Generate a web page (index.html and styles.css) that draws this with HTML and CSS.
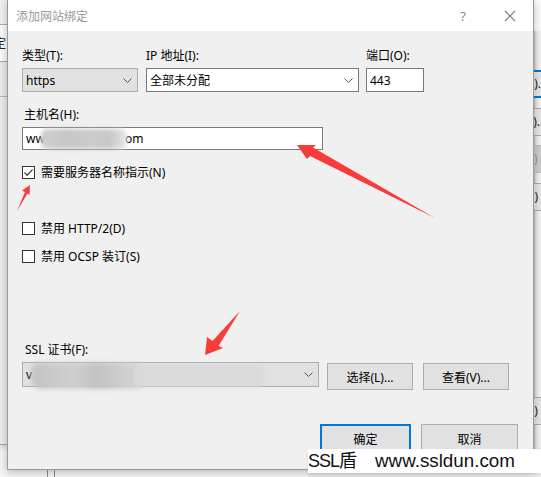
FILE: index.html
```html
<!DOCTYPE html>
<html lang="zh-CN">
<head>
<meta charset="utf-8">
<title>添加网站绑定</title>
<link rel="stylesheet" href="styles.css">
</head>
<body>
<div class="desk">
  <div class="bg-left">
    <div class="l-top"></div>
    <div class="l-row"><span class="frag">定</span></div>
    <div class="l-band"></div>
    <div class="l-rest"></div>
  </div>

  <div class="bg-right">
    <div class="r-top"></div>
    <div class="r-gap g39"></div>
    <div class="r-btn blue"><span class="frag">(A)...</span></div>
    <div class="r-gap g10"></div>
    <div class="r-btn"><span class="frag">(E)...</span></div>
    <div class="r-gap g9"></div>
    <div class="r-btn dis"><span class="frag">(R)</span></div>
    <div class="r-gap g10"></div>
    <div class="r-btn"><span class="frag">(B)</span></div>
    <div class="r-gap g186"></div>
    <div class="r-btn"><span class="frag">(C)</span></div>
  </div>

  <div class="bottom-lines"><span></span><span></span></div>

  <div class="dialog">
    <div class="titlebar">
      <span class="title">添加网站绑定</span>
      <span class="help">?</span>
      <svg class="close" width="12" height="12" viewBox="0 0 12 12"><path d="M1 1L11 11M11 1L1 11" stroke="#7a7a7a" stroke-width="1.1" fill="none"/></svg>
    </div>
    <div class="content">
      <div class="row1">
        <div class="field">
          <span class="lbl">类型(T):</span>
          <div class="select gray w-type"><span class="val">https</span><svg class="chev" width="9" height="5" viewBox="0 0 9 5"><path d="M0.5 0.5L4.5 4.5L8.5 0.5" stroke="#555" fill="none"/></svg></div>
        </div>
        <div class="field">
          <span class="lbl">IP 地址(I):</span>
          <div class="select white w-ip"><span class="val">全部未分配</span><svg class="chev" width="9" height="5" viewBox="0 0 9 5"><path d="M0.5 0.5L4.5 4.5L8.5 0.5" stroke="#555" fill="none"/></svg></div>
        </div>
        <div class="field">
          <span class="lbl">端口(O):</span>
          <div class="input w-port"><span class="val">443</span></div>
        </div>
      </div>

      <span class="lbl host-lbl">主机名(H):</span>
      <div class="input host"><span class="val">ww</span><span class="blur host-blur"></span><span class="val">om</span></div>

      <div class="check c1"><span class="box"><svg width="11" height="11" viewBox="0 0 11 11"><path d="M1.5 5.5L4.2 8.3L9.6 2.4" stroke="#444" stroke-width="1.3" fill="none"/></svg></span><span>需要服务器名称指示(N)</span></div>
      <div class="check c2"><span class="box"></span><span>禁用 HTTP/2(D)</span></div>
      <div class="check c3"><span class="box"></span><span>禁用 OCSP 装订(S)</span></div>

      <span class="lbl ssl-lbl">SSL 证书(F):</span>
      <div class="ssl-row">
        <div class="select gray w-ssl"><span class="val">v</span><span class="blur ssl-blur"></span><span class="blur ssl-blur2"></span><svg class="chev" width="9" height="5" viewBox="0 0 9 5"><path d="M0.5 0.5L4.5 4.5L8.5 0.5" stroke="#555" fill="none"/></svg></div>
        <button class="btn w-86">选择(L)...</button>
        <button class="btn w-86 ml10">查看(V)...</button>
      </div>

      <div class="actions">
        <button class="btn primary">确定</button>
        <button class="btn cancel">取消</button>
      </div>
    </div>
  </div>

  <svg class="arrows" width="541" height="477" viewBox="0 0 541 477">
    <polygon points="297,145 316,145 313,147.5 435,218 310,156 307,159" fill="#f83b3b"/>
    <polygon points="205,355 207,337 212.5,341 240,311 218.5,346 223,348" fill="#f83b3b"/>
    <polygon points="30,185 22,190.5 25,192 17,211 27.5,193.5 29.5,195" fill="#f83b3b"/>
  </svg>

  <div class="watermark"><span class="wm1">SSL盾</span><span class="wm2">www.ssldun.com</span></div>
</div>
</body>
</html>
```

FILE: styles.css
```css
* { box-sizing: border-box; }
html, body { margin: 0; padding: 0; }
body {
  width: 541px;
  height: 477px;
  overflow: hidden;
  background: #f4f4f4;
  font-family: "Noto Sans", "Noto Sans CJK SC", sans-serif;
  font-size: 12px;
  color: #000;
}
.desk { position: relative; width: 541px; height: 477px; overflow: hidden; }

/* background windows */
.bg-left {
  position: absolute; left: 0; top: 0; width: 7px; height: 470px;
  display: flex; flex-direction: column; overflow: hidden;
}
.l-top { height: 25px; background: #f0f0f0; border-bottom: 1px solid #a8a8a8; }
.l-row { height: 37px; background: #fafafa; border-bottom: 1px solid #a8a8a8; line-height: 36px; }
.l-band { height: 35px; background: #e9e9e9; border-bottom: 1px solid #b8b8b8; }
.l-rest { height: 348px; background: #ececec; border-bottom: 1px solid #a0a0a0; box-shadow: 0 3px 4px rgba(0,0,0,0.12); }
.frag { display: inline-block; white-space: nowrap; color: #222; }
.l-row .frag { margin-left: -6px; font-family: "Noto Sans CJK SC", sans-serif; }

.bg-right {
  position: absolute; left: 533px; top: 0; width: 8px; height: 449px;
  display: flex; flex-direction: column; overflow: hidden;
  background: #f0f0f0;
  box-shadow: inset 3px 0 3px -1px rgba(0,0,0,0.25);
}
.r-top { height: 31px; background: #fbfbfb; flex: none; }
.r-gap { flex: none; }
.g39 { height: 39px; }
.g10 { height: 10px; }
.g9 { height: 9px; }
.g186 { height: 186px; }
.r-btn {
  flex: none; height: 28px; background: #e5e5e5;
  border-top: 1px solid #a8a8a8; border-bottom: 1px solid #a8a8a8;
  line-height: 26px; white-space: nowrap;
}
.r-btn .frag { margin-left: -10px; }
.r-btn.blue { border-top: 2px solid #0078d7; border-bottom: 2px solid #0078d7; line-height: 24px; }
.r-btn.dis { background: #cccccc; border-color: #c0c0c0; }
.r-btn.dis .frag { color: #9a9a9a; }

.bottom-lines { position: absolute; left: 47px; top: 469px; height: 8px; display: flex; gap: 6px; }
.bottom-lines span { width: 1px; height: 8px; background: #8a8a8a; }

/* dialog */
.dialog {
  position: absolute; left: 7px; top: 0; width: 527px; height: 470px;
  background: #f0f0f0;
  border: 1px solid #9a9a9a; border-top: none;
  box-shadow: 0 2px 8px rgba(0,0,0,0.25);
  display: flex; flex-direction: column;
}
.titlebar {
  height: 31px; flex: none; background: #fff;
  display: flex; align-items: center;
  padding-left: 8px;
}
.title { color: #9a9a9a; font-family: "Noto Sans CJK SC", sans-serif; font-size: 12px; }
.help { margin-left: auto; color: #8a8a8a; font-size: 13px; margin-right: 38px; }
.close { margin-right: 17px; }

.content {
  padding: 17px 15px 0 14px;
  display: flex; flex-direction: column; align-items: flex-start;
}
.lbl { display: block; line-height: 16px; height: 16px; white-space: nowrap; }
.row1 { display: flex; }
.field { display: flex; flex-direction: column; }
.field + .field { margin-left: 8px; }
.field:last-child { margin-left: 7px; }
.field .lbl { margin-bottom: 4px; }

.select, .input {
  height: 24px; display: flex; align-items: center;
  padding-left: 3px; white-space: nowrap; position: relative;
}
.select.gray { background: #e1e1e1; border: 1px solid #adadad; }
.select.white, .input { background: #fff; border: 1px solid #7a7a7a; }
.chev { margin-left: auto; margin-right: 5px; flex: none; }
.w-type { width: 116px; }
.w-ip { width: 213px; }
.w-port { width: 58px; }

.host-lbl { margin-top: 15px; padding-left: 2px; }
.host { width: 301px; height: 23px; margin-top: 4px; overflow: visible; }
.blur { display: inline-block; filter: blur(2px); }
.host-blur {
  width: 86px; height: 20px; margin: 0 -2px 0 -4px;
  background: linear-gradient(90deg, #d0d0d0 0%, #c6c6c6 30%, #cbcbcb 60%, #c8c8c8 80%, #e6e6e6 100%);
  border-radius: 6px;
}

.check { display: flex; align-items: center; height: 16px; white-space: nowrap; }
.box {
  width: 13px; height: 13px; border: 1px solid #333; background: #fff;
  margin-right: 6px; display: flex; align-items: center; justify-content: center; flex: none;
}
.c1 { margin-top: 14px; }
.c2 { margin-top: 40px; }
.c3 { margin-top: 12px; }

.ssl-lbl { margin-top: 78px; padding-left: 3px; }
.ssl-row { display: flex; align-items: flex-start; margin-top: 4px; }
.w-ssl { width: 297px; height: 25px; overflow: visible; }
.ssl-blur {
  position: absolute; left: 8px; top: 0; width: 110px; height: 26px;
  background: linear-gradient(90deg, #c4c4c4 0%, #cfcfcf 40%, #c2c2c2 60%, #d6d6d6 100%);
  border-radius: 8px 4px 4px 10px;
}
.ssl-blur2 {
  position: absolute; left: 112px; top: 2px; width: 128px; height: 22px;
  background: #dadada;
  border-radius: 6px;
}

.btn {
  font-family: inherit; font-size: 12px; color: #000;
  background: #e1e1e1; border: 1px solid #adadad;
  height: 27px; padding: 0; margin: 0; margin-top: 1px;
}
.w-86 { width: 86px; margin-left: 8px; }
.ml10 { margin-left: 10px; }

.actions { display: flex; align-self: stretch; justify-content: flex-end; margin-top: 33px; }
.primary { width: 91px; height: 30px; border: 2px solid #0078d7; }
.cancel { width: 97px; height: 30px; margin-left: 10px; }

.arrows { position: absolute; left: 0; top: 0; pointer-events: none; }

.watermark {
  position: absolute; left: 308px; top: 449px; width: 233px; height: 24px;
  background: #fff;
  display: flex; align-items: center;
  font-family: "Liberation Sans", "Noto Sans CJK SC", sans-serif;
  font-size: 18px; line-height: 24px; color: #111;
  box-shadow: 0 3px 3px rgba(0,0,0,0.1);
}
.wm1 { letter-spacing: -1px; }
.wm2 { margin-left: 19px; font-size: 18.8px; }
```
